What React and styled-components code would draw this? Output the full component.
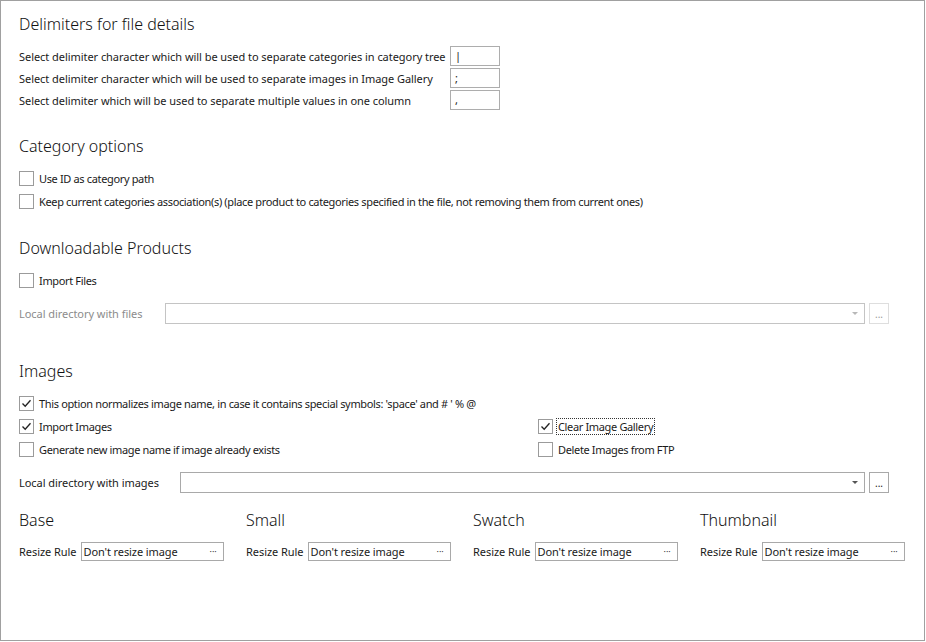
import React from "react";
import styled, { createGlobalStyle } from "styled-components";

const Global = createGlobalStyle`
  body {
    margin: 0;
    background: #fff;
    font-family: "Noto Sans", "Open Sans", sans-serif;
    color: #1a1a1a;
  }
`;

const Frame = styled.div`
  box-sizing: border-box;
  width: 925px;
  height: 641px;
  border: 1px solid #a0a0a0;
  padding: 11px 0 0 18px;
  background: #fff;
  font-size: 11px;
`;

const Title = styled.div`
  font-size: 16px;
  font-weight: 300;
  line-height: 24px;
  margin-top: ${(p) => p.$mt || 0}px;
  color: #111;
`;

const SubTitle = styled.div`
  font-size: 16px;
  font-weight: 300;
  line-height: 22px;
  color: #111;
`;

const Rows = styled.div`
  margin-top: ${(p) => p.$mt ?? 10}px;
  display: flex;
  flex-direction: column;
`;

const DelimRow = styled.div`
  display: grid;
  grid-template-columns: 431px 50px;
  align-items: center;
  height: 22px;
`;

const Label = styled.span`
  white-space: nowrap;
  color: ${(p) => (p.$disabled ? "#8c8c8c" : "#1a1a1a")};
  letter-spacing: -0.05px;
`;

const SmallInput = styled.div`
  box-sizing: border-box;
  height: 20px;
  border: 1px solid #adadad;
  padding: 0 4px;
  line-height: 18px;
  font-size: 11px;
`;

const CheckRow = styled.div`
  display: flex;
  align-items: center;
  gap: 4px;
  height: 23px;
`;

const CheckGrid = styled.div`
  display: grid;
  grid-template-columns: 519px 1fr;
`;

const Box = styled.span`
  box-sizing: border-box;
  width: 15px;
  height: 15px;
  border: 1px solid #9b9b9b;
  background: #fff;
  display: inline-flex;
  align-items: center;
  justify-content: center;
`;

const CheckText = styled.span`
  white-space: nowrap;
  letter-spacing: -0.35px;
  outline: ${(p) => (p.$focus ? "1px dotted #333" : "none")};
  padding: 0 1px;
`;

const DirRow = styled.div`
  display: grid;
  grid-template-columns: ${(p) => p.$label}px 1fr 20px;
  column-gap: 4px;
  align-items: center;
  width: 870px;
  height: 22px;
  margin-top: ${(p) => p.$mt || 10}px;
`;

const Combo = styled.div`
  box-sizing: border-box;
  height: 21px;
  border: 1px solid ${(p) => (p.$disabled ? "#c4c4c4" : "#a9a9a9")};
  display: flex;
  align-items: center;
  justify-content: flex-end;
  padding-right: 6px;
`;

const Arrow = styled.span`
  width: 0;
  height: 0;
  border-left: 3px solid transparent;
  border-right: 3px solid transparent;
  border-top: 3px solid ${(p) => (p.$disabled ? "#b8b8b8" : "#555")};
`;

const DotsButton = styled.div`
  box-sizing: border-box;
  height: 21px;
  border: 1px solid ${(p) => (p.$disabled ? "#dedede" : "#a9a9a9")};
  color: ${(p) => (p.$disabled ? "#999" : "#222")};
  display: flex;
  align-items: center;
  justify-content: center;
  font-size: 10px;
  line-height: 1;
  padding-top: 2px;
`;

const Sizes = styled.div`
  display: grid;
  grid-template-columns: repeat(4, 227px);
  margin-top: 16px;
`;

const SizeCol = styled.div`
  display: flex;
  flex-direction: column;
  gap: 10px;
`;

const ResizeRow = styled.div`
  display: flex;
  align-items: center;
  gap: 4px;
  height: 20px;
`;

const ResizeBox = styled.div`
  box-sizing: border-box;
  width: 143px;
  height: 19px;
  border: 1px solid #a9a9a9;
  display: flex;
  align-items: center;
  justify-content: space-between;
  padding: 0 6px 0 2px;
  letter-spacing: -0.1px;
`;

const Dots = styled.span`
  font-size: 9px;
  color: #444;
`;

const Tick = () => (
  <svg width="11" height="11" viewBox="0 0 11 11">
    <polyline points="1.5,5.5 4.2,8.3 9.5,2.3" fill="none" stroke="#222" strokeWidth="1.3" />
  </svg>
);

const Check = ({ checked, label, focus }) => (
  <CheckRow>
    <Box>{checked && <Tick />}</Box>
    <CheckText $focus={focus}>{label}</CheckText>
  </CheckRow>
);

const delimiters = [
  ["Select delimiter character which will be used to separate categories in category tree", "|"],
  ["Select delimiter character which will be used to separate images in Image Gallery", ";"],
  ["Select delimiter which will be used to separate multiple values in one column", ","],
];

const sizes = ["Base", "Small", "Swatch", "Thumbnail"];

export default function App() {
  return (
    <>
      <Global />
      <Frame>
        <Title>Delimiters for file details</Title>
        <Rows $mt={9}>
          {delimiters.map(([label, value]) => (
            <DelimRow key={label}>
              <Label>{label}</Label>
              <SmallInput>{value}</SmallInput>
            </DelimRow>
          ))}
        </Rows>

        <Title $mt={23}>Category options</Title>
        <Rows $mt={9}>
          <Check label="Use ID as category path" />
          <Check label="Keep current categories association(s) (place product to categories specified in the file, not removing them from current ones)" />
        </Rows>

        <Title $mt={23}>Downloadable Products</Title>
        <Rows $mt={9}>
          <Check label="Import Files" />
        </Rows>
        <DirRow $label={142} $mt={10}>
          <Label $disabled>Local directory with files</Label>
          <Combo $disabled>
            <Arrow $disabled />
          </Combo>
          <DotsButton $disabled>...</DotsButton>
        </DirRow>

        <Title $mt={35}>Images</Title>
        <Rows $mt={9}>
          <Check checked label="This option normalizes image name, in case it contains special symbols: 'space' and # ' % @" />
          <CheckGrid>
            <Check checked label="Import Images" />
            <Check checked focus label="Clear Image Gallery" />
            <Check label="Generate new image name if image already exists" />
            <Check label="Delete Images from FTP" />
          </CheckGrid>
        </Rows>
        <DirRow $label={157}>
          <Label>Local directory with images</Label>
          <Combo>
            <Arrow />
          </Combo>
          <DotsButton>...</DotsButton>
        </DirRow>

        <Sizes>
          {sizes.map((name) => (
            <SizeCol key={name}>
              <SubTitle>{name}</SubTitle>
              <ResizeRow>
                <Label>Resize Rule</Label>
                <ResizeBox>
                  <span>Don't resize image</span>
                  <Dots>···</Dots>
                </ResizeBox>
              </ResizeRow>
            </SizeCol>
          ))}
        </Sizes>
      </Frame>
    </>
  );
}
